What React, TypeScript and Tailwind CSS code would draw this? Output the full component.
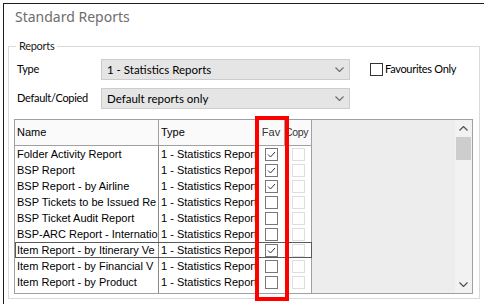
const rows = [
  { name: "Folder Activity Report", fav: true },
  { name: "BSP Report", fav: true },
  { name: "BSP Report - by Airline", fav: true },
  { name: "BSP Tickets to be Issued Re", fav: false },
  { name: "BSP Ticket Audit Report", fav: false },
  { name: "BSP-ARC Report - Internatio", fav: false },
  { name: "Item Report - by Itinerary Ve", fav: true, focused: true },
  { name: "Item Report - by Financial V", fav: false },
  { name: "Item Report - by Product", fav: false },
]

const grid = "font-['Liberation_Sans',Arial,sans-serif]"

function Chevron({ up = false, className = "" }: { up?: boolean; className?: string }) {
  return (
    <svg width="9" height="5" viewBox="0 0 9 5" className={className}>
      <polyline
        points={up ? "0.5,4.5 4.5,0.5 8.5,4.5" : "0.5,0.5 4.5,4.5 8.5,0.5"}
        fill="none"
        stroke="currentColor"
        strokeWidth="1.2"
      />
    </svg>
  )
}

function Select({ value }: { value: string }) {
  return (
    <div className="flex h-[21px] w-[249px] items-center justify-between border border-[#cccccc] bg-[#e5e5e5] pl-[5px] pr-[5px]">
      <span className="text-[11.5px] leading-none tracking-normal text-black">{value}</span>
      <Chevron className="text-[#707070]" />
    </div>
  )
}

function Check({ checked, disabled = false }: { checked: boolean; disabled?: boolean }) {
  return (
    <div
      className={
        disabled
          ? "h-[13px] w-[13px] border border-[#dedede] bg-white"
          : "h-[13px] w-[13px] border border-[#777777] bg-white"
      }
    >
      {checked && (
        <svg width="11" height="11" viewBox="0 0 11 11">
          <polyline points="2,5.5 4.5,8 9,3" fill="none" stroke="#333333" strokeWidth="1" />
        </svg>
      )}
    </div>
  )
}

export default function App() {
  return (
    <div className="relative h-[304px] w-[484px] overflow-hidden bg-white pl-[3px] pt-[3px] font-['Lato',sans-serif]">
      <div className="h-full border-l border-t border-[#1e1e1e]">
        <div className="h-[34px] pl-[11px] pt-[3px] font-['Noto_Sans',sans-serif] text-[14px] leading-[20px] text-[#6d6d6d]">
          Standard Reports
        </div>

        <fieldset className="ml-[4px] h-[261px] w-[472px] border border-[#d9d9d9]">
          <legend className="ml-[7px] px-[3px] text-[11px] leading-[16px] tracking-[-0.3px] text-[#1a1a1a]">
            Reports
          </legend>

          <div className="mt-[5px] flex h-[21px] items-center pl-[8px] text-[11px] tracking-[-0.3px] text-black">
            <span className="w-[84px]">Type</span>
            <Select value="1 - Statistics Reports" />
            <div className="ml-[20px] h-[13px] w-[13px] border border-[#333333] bg-white" />
            <span className="ml-[2px]">Favourites Only</span>
          </div>

          <div className="mt-[8px] flex h-[21px] items-center pl-[8px] text-[11px] tracking-[-0.3px] text-black">
            <span className="w-[84px]">Default/Copied</span>
            <Select value="Default reports only" />
          </div>

          <div className={`ml-[5px] mt-[10px] flex h-[175px] w-[459px] border border-[#a0a0a0] bg-[#ededed] text-[11px] text-black ${grid}`}>
            <div className="flex h-full w-[297px] flex-col bg-white">
              <div className="flex h-[26px] items-center border-b border-[#a0a0a0] bg-[#fafafa]">
                <div className="flex h-full w-[144px] items-center border-r border-[#a0a0a0] pl-[2px]">Name</div>
                <div className="flex h-full w-[99px] items-center border-r border-[#d0d0d0] pl-[2px]">Type</div>
                <div className="flex h-full w-[27px] items-center justify-center border-r border-[#a0a0a0] text-[#333]">Fav</div>
                <div className="flex h-full w-[27px] items-center overflow-hidden whitespace-nowrap border-r border-[#a0a0a0] text-[10.5px] tracking-[-0.3px] text-[#333]">Copy</div>
              </div>
              <div className="flex flex-1 flex-col">
                {rows.map((r) => (
                  <div
                    key={r.name}
                    className={
                      r.focused
                        ? "flex h-[16px] items-center outline outline-1 -outline-offset-1 outline-[#5a5a5a]"
                        : "flex h-[16px] items-center"
                    }
                  >
                    <div className="h-full w-[144px] overflow-hidden whitespace-nowrap border-r border-[#8a8a8a] pl-[2px] leading-[16px]">
                      {r.name}
                    </div>
                    <div className="h-full w-[99px] overflow-hidden whitespace-nowrap pl-[2px] leading-[16px]">
                      1 - Statistics Reports
                    </div>
                    <div className="flex h-full w-[27px] items-center justify-center">
                      <Check checked={r.fav} />
                    </div>
                    <div className="flex h-full w-[27px] items-center justify-center border-r border-[#a0a0a0]">
                      <Check checked={false} disabled />
                    </div>
                  </div>
                ))}
                <div className="flex flex-1">
                  <div className="w-[144px] border-r border-[#8a8a8a]" />
                  <div className="w-[153px] border-r border-[#a0a0a0]" />
                </div>
              </div>
            </div>
            <div className="flex-1" />
            <div className="flex h-full w-[17px] flex-col items-center bg-[#f2f2f2]">
              <div className="flex h-[17px] items-center justify-center text-[#505050]">
                <Chevron up />
              </div>
              <div className="h-[23px] w-[15px] bg-[#cdcdcd]" />
              <div className="flex-1" />
              <div className="flex h-[17px] items-center justify-center text-[#505050]">
                <Chevron />
              </div>
            </div>
          </div>
        </fieldset>
      </div>

      <div className="absolute left-[255px] top-[116px] h-[185px] w-[34px] border-4 border-[#ff0000]" />
    </div>
  )
}
